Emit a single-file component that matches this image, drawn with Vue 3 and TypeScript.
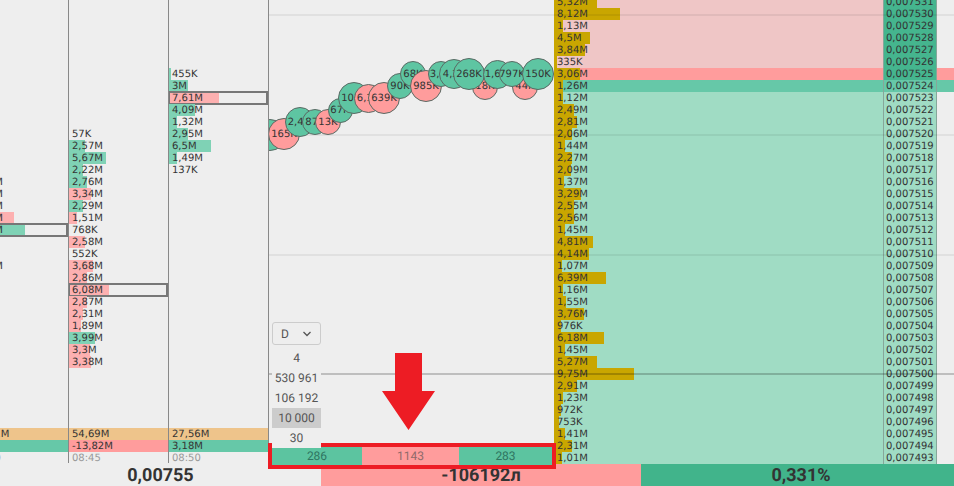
<script setup lang="ts">
type Tone = '' | 'g' | 'p'
interface Cell { t: string; w?: number; c?: Tone; box?: boolean }
interface Cluster { name: string; rows: Cell[]; vol: string; delta: string; deltaTone: Tone; time: string }

const clusters: Cluster[] = [
  {
    name: 'a',
    rows: [
      { t: '2,87M' }, { t: '2,12M' }, { t: '1,96M' },
      { t: '3,02M', w: 45, c: 'p' },
      { t: '4,33M', w: 56, c: 'g', box: true },
      { t: '814K' }, { t: '620K' }, { t: '1,74M' },
    ],
    vol: '42,51M', delta: '', deltaTone: 'g', time: '08:40',
  },
  {
    name: 'b',
    rows: [
      { t: '57K' },
      { t: '2,57M', w: 16, c: 'g' }, { t: '5,67M', w: 37, c: 'g' },
      { t: '2,22M', w: 14, c: 'g' }, { t: '2,76M', w: 18, c: 'g' },
      { t: '3,34M', w: 22, c: 'p' }, { t: '2,29M', w: 14, c: 'g' },
      { t: '1,51M', w: 8, c: 'p' }, { t: '768K' },
      { t: '2,58M', w: 16, c: 'p' }, { t: '552K' },
      { t: '3,68M', w: 24, c: 'p' }, { t: '2,86M', w: 18, c: 'p' },
      { t: '6,08M', w: 40, c: 'p', box: true },
      { t: '2,87M', w: 18, c: 'p' }, { t: '2,31M', w: 14, c: 'p' },
      { t: '1,89M', w: 12, c: 'p' }, { t: '3,99M', w: 26, c: 'g' },
      { t: '3,3M', w: 21, c: 'p' }, { t: '3,38M', w: 22, c: 'p' },
    ],
    vol: '54,69M', delta: '-13,82M', deltaTone: 'p', time: '08:45',
  },
  {
    name: 'c',
    rows: [
      { t: '455K', w: 2, c: 'g' }, { t: '3M', w: 19, c: 'g' },
      { t: '7,61M', w: 50, c: 'p', box: true },
      { t: '4,09M', w: 26, c: 'g' }, { t: '1,32M', w: 8, c: 'g' },
      { t: '2,95M', w: 19, c: 'g' }, { t: '6,5M', w: 42, c: 'g' },
      { t: '1,49M', w: 8, c: 'g' }, { t: '137K' },
    ],
    vol: '27,56M', delta: '3,18M', deltaTone: 'g', time: '08:50',
  },
]

interface Bubble { x: number; y: number; r: number; t: string; c: Tone }
const bubbles: Bubble[] = [
  { x: 1, y: 135, r: 16, t: '', c: 'g' },
  { x: 15, y: 134, r: 16, t: '165K', c: 'p' },
  { x: 31, y: 122, r: 15, t: '2,4M', c: 'g' },
  { x: 46, y: 122, r: 13, t: '87K', c: 'g' },
  { x: 59, y: 122, r: 13, t: '13K', c: 'p' },
  { x: 71, y: 110, r: 12.5, t: '67K', c: 'g' },
  { x: 85, y: 98, r: 16, t: '101K', c: 'g' },
  { x: 99, y: 98, r: 14.5, t: '6,1K', c: 'p' },
  { x: 115, y: 98, r: 16, t: '639K', c: 'p' },
  { x: 131, y: 86, r: 13, t: '90K', c: 'g' },
  { x: 144, y: 74, r: 13, t: '68K', c: 'g' },
  { x: 157, y: 86, r: 16, t: '985K', c: 'p' },
  { x: 172, y: 74, r: 13, t: '3,1K', c: 'g' },
  { x: 185, y: 74, r: 15, t: '4,2K', c: 'g' },
  { x: 216, y: 86.5, r: 13, t: '18K', c: 'p' },
  { x: 200, y: 74, r: 16, t: '268K', c: 'g' },
  { x: 228, y: 74, r: 14.5, t: '1,6M', c: 'g' },
  { x: 256, y: 86.5, r: 13, t: '44K', c: 'p' },
  { x: 243, y: 74, r: 13, t: '797K', c: 'g' },
  { x: 269, y: 74, r: 16, t: '150K', c: 'g' },
]

const volumes: [string, number][] = [
  ['5,32M', 43], ['8,12M', 66], ['1,13M', 9], ['4,5M', 36], ['3,84M', 31], ['335K', 3],
  ['3,06M', 26], ['1,26M', 9], ['1,12M', 9], ['2,49M', 20], ['2,81M', 23], ['2,06M', 18],
  ['1,44M', 11], ['2,27M', 18], ['2,09M', 17], ['1,37M', 10], ['3,29M', 27], ['2,55M', 20],
  ['2,56M', 20], ['1,45M', 11], ['4,81M', 39], ['4,14M', 35], ['1,07M', 8], ['6,39M', 52],
  ['1,16M', 9], ['1,55M', 12], ['3,76M', 30], ['976K', 7], ['6,18M', 50], ['1,45M', 11],
  ['5,27M', 43], ['9,75M', 80], ['2,91M', 23], ['1,23M', 9], ['972K', 7], ['753K', 5],
  ['1,41M', 11], ['2,31M', 18], ['1,01M', 8],
]

const zone = (i: number): string => (i < 6 ? 'ask' : i === 6 ? 'bestask' : i === 7 ? 'bestbid' : 'bid')
const price = (i: number): string => '0,00' + String(7531 - i)
const panelRows = ['4', '530 961', '106 192', '10 000', '30']
const counters: { t: string; w: number; c: Tone }[] = [
  { t: '286', w: 90, c: 'g' },
  { t: '1143', w: 97, c: 'p' },
  { t: '283', w: 93, c: 'g' },
]
const lines = [
  { name: 'l1', thick: false },
  { name: 'l2', thick: false },
  { name: 'l3', thick: false },
  { name: 'l4', thick: true },
]
</script>

<template>
  <div class="screen">
    <div class="top">
      <div v-for="col in clusters" :key="col.name" class="cluster" :class="col.name">
        <div v-for="(r, i) in col.rows" :key="i" class="cell" :class="{ box: r.box }">
          <span v-if="r.w" class="bar" :class="r.c" :style="{ width: r.w + 'px' }"></span>
          <span class="label">{{ r.t }}</span>
        </div>
        <div class="summary">
          <div class="strip vol">{{ col.vol }}</div>
          <div class="strip" :class="col.deltaTone">{{ col.delta }}</div>
          <div class="strip time">{{ col.time }}</div>
        </div>
      </div>

      <div class="center">
        <div
          v-for="(b, i) in bubbles"
          :key="i"
          class="bubble"
          :class="b.c"
          :style="{ left: b.x - b.r + 'px', top: b.y - b.r + 'px', width: b.r * 2 + 'px', height: b.r * 2 + 'px' }"
        >{{ b.t }}</div>
        <div class="panel">
          <div class="select">
            <span>D</span>
            <svg width="10" height="6" viewBox="0 0 10 6" class="chev">
              <path d="M1.5 1 L5 4.5 L8.5 1" fill="none" stroke="#555" stroke-width="1.3" />
            </svg>
          </div>
          <div v-for="(p, i) in panelRows" :key="p" class="prow" :class="{ on: i === 3 }">{{ p }}</div>
        </div>
      </div>

      <div class="profile">
        <div v-for="(v, i) in volumes" :key="i" class="vrow" :class="zone(i)">
          <span class="gold" :style="{ width: v[1] + 'px' }"></span>
          <span class="label">{{ v[0] }}</span>
        </div>
      </div>

      <div class="prices">
        <div v-for="(v, i) in volumes" :key="i" class="prow2" :class="'p-' + zone(i)">{{ price(i) }}</div>
      </div>

      <div class="edge">
        <div v-for="(v, i) in volumes" :key="i" class="erow" :class="'e-' + zone(i)"></div>
      </div>

      <div v-for="l in lines" :key="l.name" class="hline" :class="[l.name, { thick: l.thick }]"></div>
    </div>

    <div class="footer">
      <div class="fcell f1">0,00755</div>
      <div class="fcell f2">-106192л</div>
      <div class="fcell f3">0,331%</div>
    </div>

    <svg class="arrow" width="54" height="78" viewBox="0 0 54 78">
      <polygon points="13,0 40,0 40,38 53,38 26.5,77 0,38 13,38" fill="#ed1c24" />
    </svg>

    <div class="redbox">
      <div v-for="c in counters" :key="c.t" class="count" :class="c.c" :style="{ width: c.w + 'px' }">{{ c.t }}</div>
    </div>
  </div>
</template>

<style>
html, body { margin: 0; background: #eeeeee; }
</style>

<style scoped>
.screen {
  position: relative;
  width: 954px;
  height: 486px;
  overflow: hidden;
  background: #eeeeee;
  font-family: "DejaVu Sans", sans-serif;
  font-size: 10px;
  color: #333333;
  text-rendering: geometricPrecision;
}
.top {
  position: relative;
  display: flex;
  height: 464px;
  overflow: hidden;
}
.cluster {
  position: relative;
  flex: 0 0 100px;
  box-sizing: border-box;
  width: 100px;
  height: 463px;
  border-right: 1px solid #888888;
  display: flex;
  flex-direction: column;
}
.cluster.a { margin-left: -31px; padding-top: 176px; }
.cluster.b { padding-top: 128px; }
.cluster.c { padding-top: 68px; }
.cell {
  position: relative;
  height: 12px;
  line-height: 13px;
  padding-left: 3px;
}
.cell.box::after {
  content: "";
  position: absolute;
  inset: -1px 0;
  border: 2px solid #777777;
  border-left-width: 1px;
}
.bar { position: absolute; left: 0; top: 0; bottom: 0; }
.bar.g { background: #7fd2b5; }
.bar.p { background: #fdb0b0; }
.label { position: relative; }
.summary { margin-top: auto; margin-bottom: -1px; }
.strip {
  height: 12px;
  line-height: 13px;
  padding-left: 3px;
}
.strip.vol { background: #eec48b; }
.strip.g { background: #66c8a8; }
.strip.p { background: #ff9c9c; }
.strip.time { color: #999999; line-height: 14px; }

.center {
  position: relative;
  flex: 0 0 285px;
  height: 464px;
  box-sizing: border-box;
  padding: 322px 0 0 3px;
  overflow: hidden;
}
.bubble {
  position: absolute;
  z-index: 2;
  box-sizing: border-box;
  border: 1px solid #5a6a64;
  border-radius: 50%;
  display: flex;
  align-items: center;
  justify-content: center;
  white-space: nowrap;
  line-height: 13px;
}
.bubble.g { background: #5ec5a2; }
.bubble.p { background: #ff9c9c; }
.panel {
  position: relative;
  z-index: 3;
  width: 49px;
  font-family: Roboto, sans-serif;
  font-size: 12px;
  color: #555555;
  background: #eeeeee;
}
.select {
  box-sizing: border-box;
  height: 23px;
  margin-bottom: 3px;
  padding: 0 8px;
  border: 1px solid #cccccc;
  border-radius: 3px;
  display: flex;
  align-items: center;
  justify-content: space-between;
}
.prow {
  height: 20px;
  line-height: 20px;
  text-align: center;
}
.prow.on { background: #cccccc; }

.profile {
  flex: 0 0 329px;
  margin-top: -4px;
  height: 468px;
}
.vrow {
  position: relative;
  height: 12px;
  line-height: 13px;
  padding-left: 3px;
}
.gold { position: absolute; left: 0; top: 0; bottom: 0; background: #c9a600; }
.ask { background: #efc6c6; }
.bestask { background: #ff9c9c; }
.bestbid { background: #66c8a8; }
.bid { background: #a0dcc4; }

.prices {
  flex: 0 0 54px;
  box-sizing: border-box;
  margin-top: -4px;
  height: 468px;
  border-left: 1px solid #86a79a;
  border-right: 1px solid #86a79a;
}
.prow2 {
  height: 12px;
  line-height: 13px;
  padding-left: 2px;
}
.p-ask, .p-bestask { background: #45b58e; }
.p-bestbid { background: #66c8a8; }
.p-bid { background: #a0dcc4; }

.edge {
  flex: 1;
  margin-top: -4px;
  height: 468px;
}
.erow { height: 12px; }
.e-bestask { background: #ff9c9c; }
.e-bestbid { background: #66c8a8; }

.hline {
  position: absolute;
  left: 269px;
  right: 0;
  height: 2px;
  background: rgba(0, 0, 0, 0.06);
}
.hline.thick { height: 2px; background: rgba(0, 0, 0, 0.2); }
.l1 { top: 14px; }
.l2 { top: 134px; }
.l3 { top: 254px; }
.l4 { top: 373px; }

.footer {
  display: grid;
  grid-template-columns: 321px 320px 313px;
  height: 22px;
  font-family: Roboto, sans-serif;
  font-size: 18px;
  font-weight: 700;
  line-height: 24px;
  color: #333333;
  text-align: center;
}
.f1 { background: #eeeeee; }
.f2 { background: #ff9c9c; }
.f3 { background: #41b48b; padding-left: 7px; }

.arrow { position: absolute; left: 382px; top: 353px; }
.redbox {
  position: absolute;
  left: 268px;
  top: 443px;
  box-sizing: border-box;
  width: 288px;
  height: 26px;
  border: 4px solid #ed1c24;
  display: flex;
  background: #eeeeee;
  font-family: Roboto, sans-serif;
  font-size: 12px;
  line-height: 18px;
  text-align: center;
}
.count.g { background: #5cc4a0; color: #2f7560; }
.count.p { background: #ff9c9c; color: #8f6a6a; }
</style>
